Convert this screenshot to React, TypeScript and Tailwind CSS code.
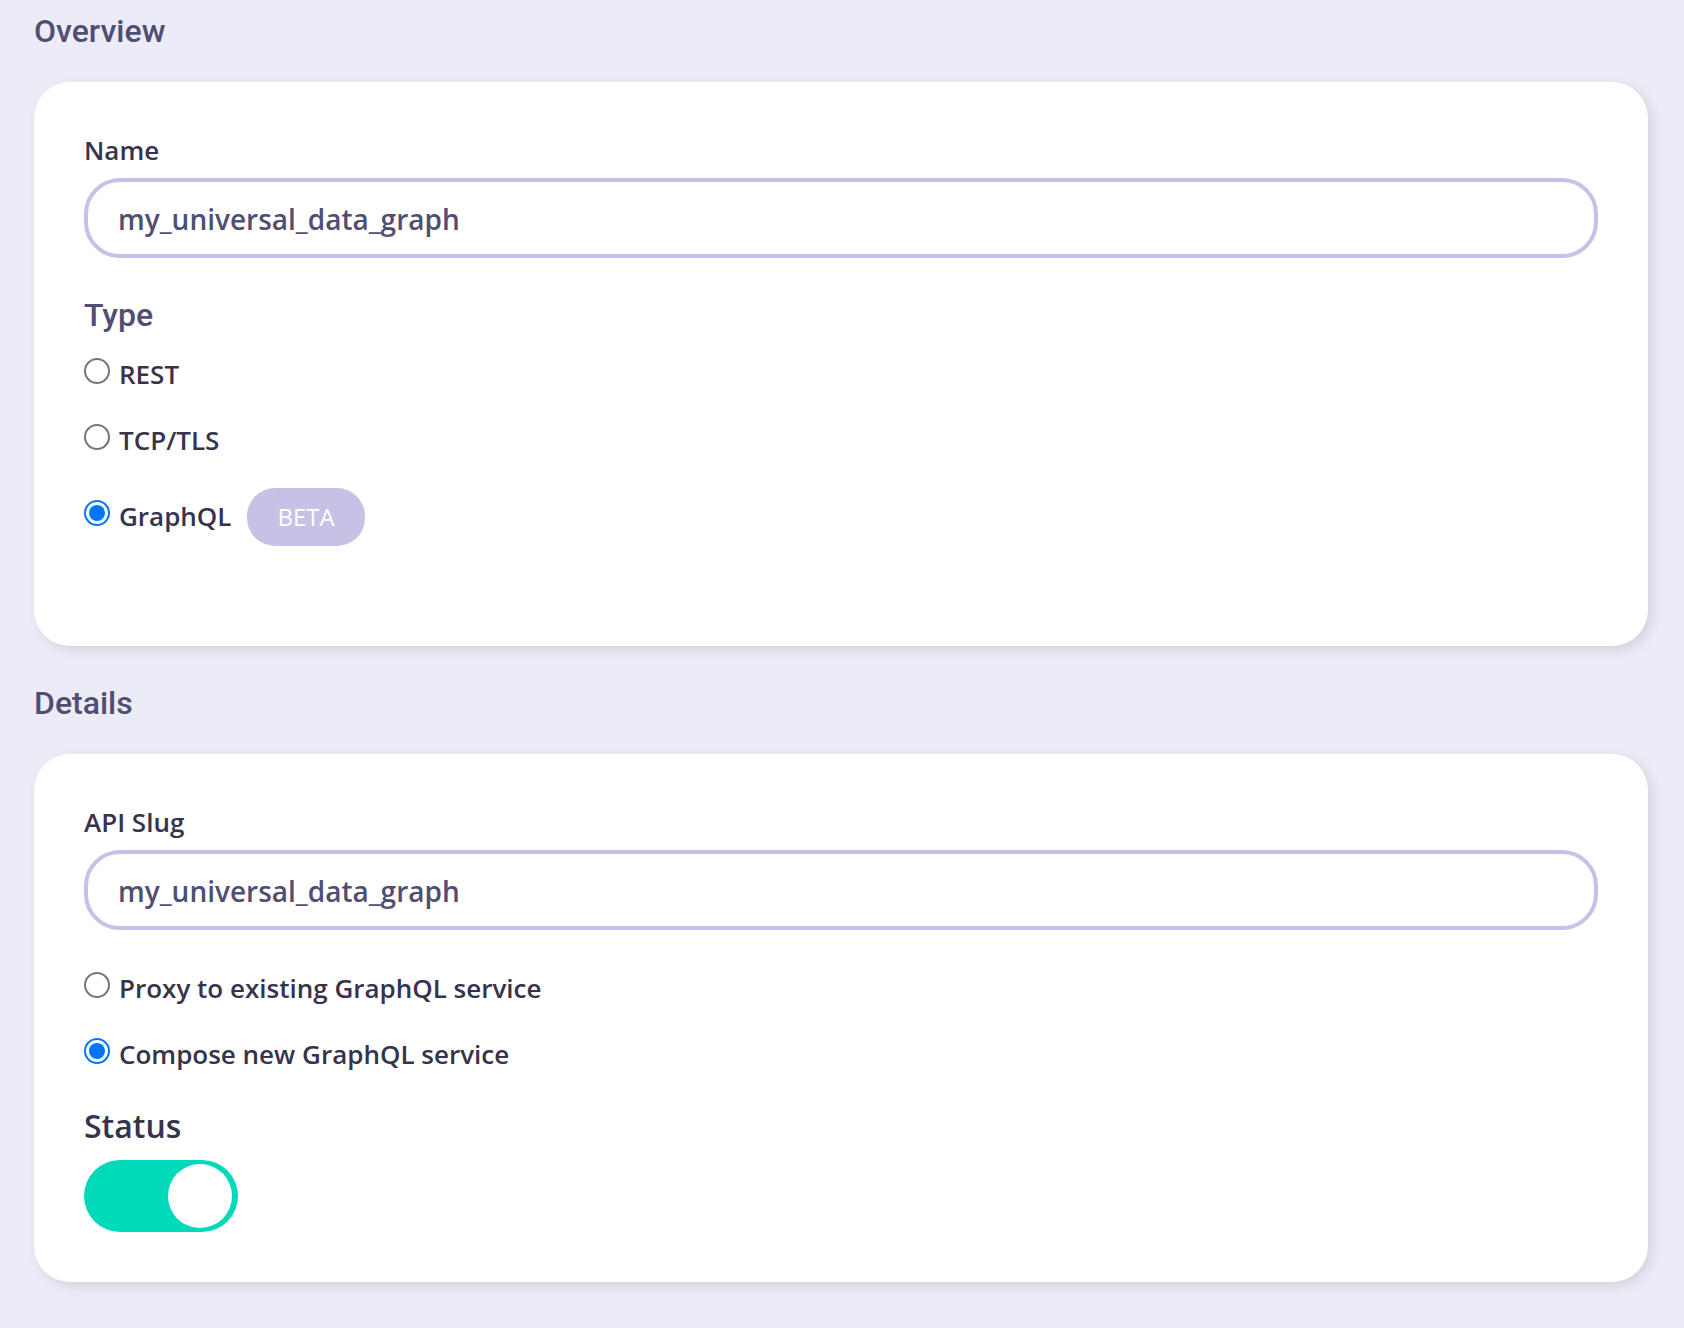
import { useState } from "react";
import type { ReactNode } from "react";

const headingClass = "font-['Roboto',sans-serif] text-[32px] leading-[44px] font-medium text-[#504e72]";

function Section({ title, children }: { title: string; children: ReactNode }) {
  return (
    <section>
      <h2 className={headingClass}>{title}</h2>
      <div className="mt-[29px] rounded-[36px] bg-white p-[50px] shadow-[4px_4px_12px_rgba(0,0,0,0.11)]">
        {children}
      </div>
    </section>
  );
}

function TextField({ id, label, initial }: { id: string; label: string; initial: string }) {
  const [value, setValue] = useState(initial);
  return (
    <div>
      <label htmlFor={id} className="block text-[26px] leading-9">
        {label}
      </label>
      <input
        id={id}
        type="text"
        value={value}
        onChange={(e) => setValue(e.target.value)}
        className="mt-2.5 block h-20 w-full rounded-[36px] border-4 border-[#c3c3e6] bg-white px-[30px] pt-0.5 text-[28px] font-semibold text-[#504e72] outline-none"
      />
    </div>
  );
}

type RadioProps = {
  name: string;
  label: string;
  checked: boolean;
  onSelect: () => void;
};

function Radio({ name, label, checked, onSelect }: RadioProps) {
  return (
    <label className="flex items-start gap-[9px] text-[26px] leading-9">
      <input
        type="radio"
        name={name}
        checked={checked}
        onChange={onSelect}
        className="mt-0.5 size-[26px] shrink-0 appearance-none rounded-full border-2 border-[#767676] bg-white bg-clip-content p-[3px] checked:border-[#0075ff] checked:bg-[#0075ff]"
      />
      {label}
    </label>
  );
}

export default function App() {
  const [type, setType] = useState("graphql");
  const [mode, setMode] = useState("compose");
  const [active, setActive] = useState(true);

  return (
    <main className="flex min-h-screen flex-col gap-[35px] bg-[#ececf8] pt-[9px] pr-9 pb-[46px] pl-[34px] font-['Open_Sans',sans-serif] font-semibold text-[#36334c]">
      <Section title="Overview">
        <TextField id="name" label="Name" initial="my_universal_data_graph" />
        <fieldset className="mt-[35px] mb-[50px]">
          <legend className={headingClass}>Type</legend>
          <div className="mt-[19px] flex flex-col gap-[30px]">
            <Radio name="type" label="REST" checked={type === "rest"} onSelect={() => setType("rest")} />
            <Radio name="type" label="TCP/TLS" checked={type === "tcp"} onSelect={() => setType("tcp")} />
            <div className="flex items-start gap-4">
              <div className="pt-2.5">
                <Radio name="type" label="GraphQL" checked={type === "graphql"} onSelect={() => setType("graphql")} />
              </div>
              <span className="rounded-[28px] bg-[#c5c2e5] px-[30px] py-[11px] text-2xl leading-9 font-normal text-white">
                BETA
              </span>
            </div>
          </div>
        </fieldset>
      </Section>

      <Section title="Details">
        <TextField id="slug" label="API Slug" initial="my_universal_data_graph" />
        <fieldset className="mt-10 flex flex-col gap-[30px]">
          <Radio
            name="mode"
            label="Proxy to existing GraphQL service"
            checked={mode === "proxy"}
            onSelect={() => setMode("proxy")}
          />
          <Radio
            name="mode"
            label="Compose new GraphQL service"
            checked={mode === "compose"}
            onSelect={() => setMode("compose")}
          />
        </fieldset>
        <div className="mt-8">
          <label htmlFor="status" className="block text-[32px] leading-[44px]">
            Status
          </label>
          <button
            id="status"
            type="button"
            role="switch"
            aria-checked={active}
            onClick={() => setActive(!active)}
            className="mt-3 flex h-[72px] w-[154px] items-center justify-start rounded-full bg-gray-300 px-1.5 aria-checked:justify-end aria-checked:bg-[#00dabb]"
          >
            <span className="size-16 rounded-full bg-white" />
          </button>
        </div>
      </Section>
    </main>
  );
}
